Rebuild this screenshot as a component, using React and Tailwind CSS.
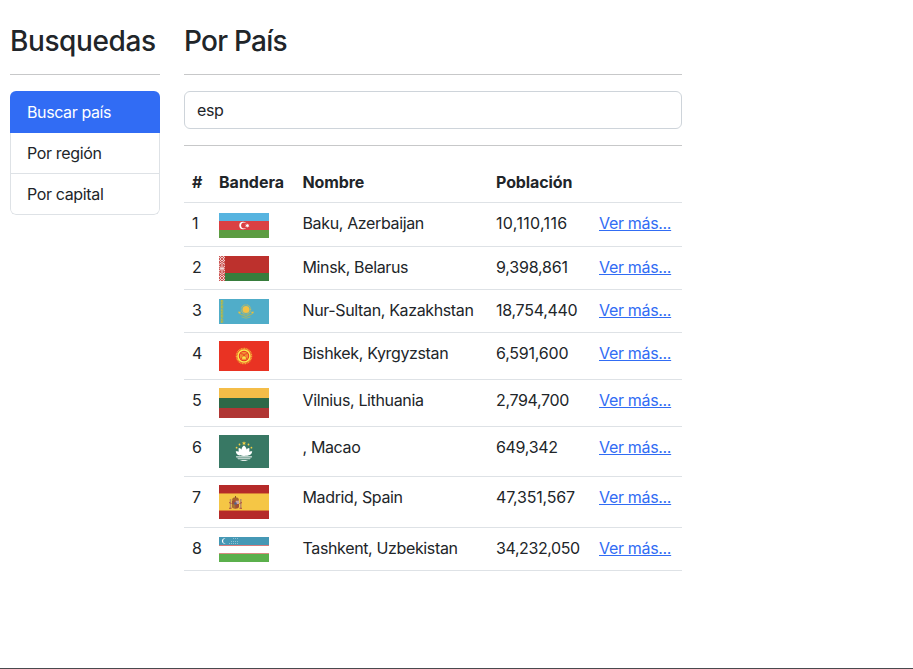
import React from "react";

const AzFlag = () => (
  <svg width="50" height="25" viewBox="0 0 50 25" className="block">
    <rect width="50" height="25" fill="#57b4e0" />
    <rect y="8" width="50" height="9" fill="#da4043" />
    <rect y="17" width="50" height="8" fill="#5c9c42" />
    <circle cx="24" cy="12.5" r="3.7" fill="#fff" />
    <circle cx="25.1" cy="12.5" r="3" fill="#da4043" />
    <path d="M28.3 10.4l.6 1.3 1.5-.3-.8 1.1.8 1.2-1.5-.3-.6 1.3-.6-1.3-1.5.3.8-1.2-.8-1.1 1.5.3z" fill="#fff" />
  </svg>
);

const ByFlag = () => (
  <svg width="50" height="25" viewBox="0 0 50 25" className="block">
    <rect width="50" height="17" fill="#bd312d" />
    <rect y="17" width="50" height="8" fill="#377d3c" />
    <rect width="6" height="25" fill="#cc5552" />
    <g stroke="#f4dcdc" strokeWidth=".9" fill="none">
      <path d="M0 1l2 2-2 2M6 1L4 3l2 2M1 0l2 2 2-2M1 6l2-2 2 2M0 8.5l3-2 3 2M3 8v9M0 10l3 2.5L6 10M0 15l3-2.500 3 2.500M.5 12.500h5M0 16.500l3 2 3-2M0 20l2 2-2 2M6 20l-2 2 2 2M1 25l2-2 2 2M1 19l2 2 2-2" />
    </g>
  </svg>
);

const KzFlag = () => (
  <svg width="50" height="25" viewBox="0 0 50 25" className="block">
    <rect width="50" height="25" fill="#50adc9" />
    <path d="M3 1v23" stroke="#93b56d" strokeWidth="2.600" strokeDasharray="4 .7" />
    <path d="M2.700 1v23" stroke="#c2bb45" strokeWidth=".9" strokeDasharray="2 1" />
    <circle cx="27" cy="10.500" r="4.600" fill="none" stroke="#b8bb68" strokeWidth="1.300" strokeDasharray=".8 .5" />
    <circle cx="27" cy="10.500" r="3.500" fill="#f3c244" />
    <path d="M19.700 12.500c.2 2 1.500 3 4 3.400l3.300 1.600 3.300-1.600c2.500-.4 3.800-1.400 4-3.400" fill="none" stroke="#9fb56e" strokeWidth="1.200" />
    <path d="M19.600 13.500h2M32.400 13.500h2" stroke="#e5bf45" strokeWidth="1.300" />
    <path d="M22.500 18l4.500 1.200 4.500-1.200" fill="none" stroke="#a9b767" strokeWidth=".8" />
  </svg>
);

const KgFlag = () => (
  <svg width="50" height="30" viewBox="0 0 50 30" className="block">
    <rect width="50" height="30" fill="#e93323" />
    <circle cx="25" cy="15" r="7.500" fill="none" stroke="#f5a534" strokeWidth="1.500" strokeDasharray="1.100 .5" />
    <circle cx="25" cy="15" r="6" fill="none" stroke="#fae94e" strokeWidth="1.600" />
    <circle cx="25" cy="15" r="3.900" fill="#f08b31" stroke="#f6ae3a" strokeWidth=".5" />
    <path d="M21.500 12.500c3 0 5 3 6.200 5.700M28.500 12.500c-3 0-5 3-6.200 5.700" fill="none" stroke="#e93323" strokeWidth=".8" />
    <path d="M23 17.800l.5-2.300h3l.5 2.300z" fill="#fae94e" />
  </svg>
);

const LtFlag = () => (
  <svg width="50" height="30" viewBox="0 0 50 30" className="block">
    <rect width="50" height="10" fill="#f4bd48" />
    <rect y="10" width="50" height="10" fill="#2e6847" />
    <rect y="20" width="50" height="10" fill="#b03634" />
  </svg>
);

const MoFlag = () => (
  <svg width="50" height="33" viewBox="0 0 50 33" className="block">
    <rect width="50" height="33" fill="#387864" />
    <g fill="#f2cf46">
      <path d="M25 6.200l.6 1.300 1.500.1-1.100 1 .4 1.300-1.400-.7-1.400.7.400-1.300-1.100-1 1.500-.1z" />
      <circle cx="20.500" cy="9.500" r=".9" />
      <circle cx="29.500" cy="9.500" r=".9" />
      <circle cx="17.600" cy="12.700" r=".9" />
      <circle cx="32.400" cy="12.700" r=".9" />
    </g>
    <g fill="#fff">
      <path d="M25 10.500c2.900 2.200 3.300 5 2 9.500h-4c-1.300-4.500-.9-7.300 2-9.500z" />
      <path d="M19.700 13c3.300.7 4.500 2.800 4.800 7-3.800 0-5.400-2.800-4.800-7zM30.300 13c-3.300.7-4.500 2.800-4.800 7 3.800 0 5.400-2.800 4.800-7z" />
      <path d="M16.800 16.300c3-.3 5.700.9 8.200 3.300 2.500-2.400 5.200-3.600 8.200-3.300-.4 3.700-2.800 4.600-8.200 4.600s-7.800-.9-8.200-4.600z" />
      <path d="M16.900 21.300h16.200l-.4 1.100H17.300z" opacity=".85" />
      <path d="M18.200 23.200h13.600l-1 1H19.200zM20.800 25h8.400l-2.600 1.100h-3.200z" opacity=".85" />
    </g>
  </svg>
);

const EsFlag = () => (
  <svg width="50" height="34" viewBox="0 0 50 34" className="block">
    <rect width="50" height="34" fill="#b52a29" />
    <rect y="8" width="50" height="18" fill="#d97d35" />
    <rect y="9" width="50" height="16" fill="#f5c645" />
    <path d="M11.500 14v9.500M21.800 14v9.500" stroke="#b88c67" strokeWidth="1.500" />
    <path d="M10 17.500l2.500 1M20.500 18.500l2.500-1M10 23.300h2.500M20.500 23.300H23" stroke="#b04f3c" strokeWidth="1" />
    <path d="M13.200 14.500c0-3 6.600-3 6.600 0l-.6 1.500h-5.400z" fill="#a8632d" />
    <path d="M16.500 11v2" stroke="#86502a" strokeWidth="1" />
    <path d="M13 15.500h7v5.900c0 3-7 3-7 0z" fill="#a05035" />
    <path d="M16.700 15.700H20V19h-3.300z" fill="#c8a4a0" />
    <path d="M13.100 19.200h3.200v4c-2-.2-3.200-.8-3.200-2z" fill="#a87035" />
    <circle cx="16.500" cy="18.500" r="1.300" fill="#53648b" />
  </svg>
);

const UzFlag = () => (
  <svg width="50" height="25" viewBox="0 0 50 25" className="block">
    <rect width="50" height="25" fill="#fff" />
    <rect width="50" height="8" fill="#4598b5" />
    <rect y="8" width="50" height="1" fill="#d47d7d" />
    <rect y="16" width="50" height="1" fill="#d88a80" />
    <rect y="17" width="50" height="8" fill="#5bb04c" />
    <path d="M6.600 1.500a2.700 2.700 0 1 0 0 5 2.300 2.300 0 0 1 0-5z" fill="#fff" />
    <g fill="#8cc0d2">
      <path d="M14 1h1v1h-1zM16 1h1v1h-1zM18 1h1v1h-1zM12 4h1v1h-1zM14 4h1v1h-1zM16 4h1v1h-1zM18 4h1v1h-1zM10 6h1v1h-1zM12 6h1v1h-1zM14 6h1v1h-1zM16 6h1v1h-1zM18 6h1v1h-1z" />
    </g>
  </svg>
);

const countries = [
  { flag: AzFlag, name: "Baku, Azerbaijan", population: "10,110,116", row: "h-11", pad: "pt-[10px]", track: "tracking-[0.32px]" },
  { flag: ByFlag, name: "Minsk, Belarus", population: "9,398,861", row: "h-[43px]", pad: "pt-[9px]", track: "tracking-[-0.2px]" },
  { flag: KzFlag, name: "Nur-Sultan, Kazakhstan", population: "18,754,440", row: "h-[43px]", pad: "pt-[9px]", track: "tracking-[-0.28px]" },
  { flag: KgFlag, name: "Bishkek, Kyrgyzstan", population: "6,591,600", row: "h-[47px]", pad: "pt-2", track: "tracking-[-0.22px]" },
  { flag: LtFlag, name: "Vilnius, Lithuania", population: "2,794,700", row: "h-[47px]", pad: "pt-2", track: "tracking-[-0.36px]" },
  { flag: MoFlag, name: ", Macao", population: "649,342", row: "h-[50px]", pad: "pt-2", track: "tracking-[-0.32px]" },
  { flag: EsFlag, name: "Madrid, Spain", population: "47,351,567", row: "h-[51px]", pad: "pt-2", track: "tracking-[-0.2px]" },
  { flag: UzFlag, name: "Tashkent, Uzbekistan", population: "34,232,050", row: "h-[43px]", pad: "pt-[9px]", track: "tracking-[-0.4px]" },
];

const columns = "grid grid-cols-[27px_83.500px_193.500px_103px_91px] border-b border-[#dee2e6]";

export default function App() {
  return (
    <div className="flex h-[669px] flex-col justify-between overflow-hidden border-b border-[#4a4a4e] bg-white font-['Inter',sans-serif] text-base tracking-[-0.32px] text-[#212529]">
      <div className="flex gap-6 pl-2.5 pt-6">
        <aside className="w-[150px]">
          <h1 className="h-[50px] whitespace-nowrap text-[28px] font-[550] leading-[34px] tracking-[-0.4px]">Busquedas</h1>
          <hr className="border-t border-[#c7c8c9]" />
          <ul className="mt-4 overflow-hidden rounded-md tracking-[-0.36px]">
            <li className="h-[42px] bg-[#316cf4] px-[17px] py-[9px] tracking-[-0.4px] text-white">Buscar país</li>
            <li className="h-[41px] border-x border-b border-[#dee2e6] px-4 py-2">Por región</li>
            <li className="h-[41px] rounded-b-md border-x border-b border-[#dee2e6] px-4 py-2">Por capital</li>
          </ul>
        </aside>
        <main className="w-[498px]">
          <h1 className="h-[50px] text-[28px] font-[550] leading-[34px] tracking-[-0.75px]">Por País</h1>
          <hr className="border-t border-[#c7c8c9]" />
          <input
            type="text"
            defaultValue="esp"
            className="mt-4 block h-[38px] w-full rounded-md border border-[#ced4da] bg-white px-3 tracking-[-0.38px] outline-none"
          />
          <hr className="mt-4 border-t border-[#c7c8c9]" />
          <section className="mt-4">
            <div className={`${columns} h-[41px] pt-2 font-bold tracking-[-0.1px]`}>
              <span className="pl-2">#</span>
              <span className="pl-2 tracking-[0px]">Bandera</span>
              <span className="pl-2">Nombre</span>
              <span className="pl-2">Población</span>
            </div>
            {countries.map(({ flag: Flag, name, population, row, pad, track }, i) => (
              <div key={name} className={`${columns} ${row}`}>
                <span className="pl-2 pt-2">{i + 1}</span>
                <span className={`pl-2 ${pad}`}><Flag /></span>
                <span className="whitespace-nowrap pl-2 pt-2 tracking-[-0.36px]">{name}</span>
                <span className={`pl-2 pt-2 ${track}`}>{population}</span>
                <span className="pl-2 pt-2">
                  <a href="#" className="whitespace-nowrap text-[#316cf4] underline">Ver más...</a>
                </span>
              </div>
            ))}
          </section>
        </main>
      </div>
    </div>
  );
}
